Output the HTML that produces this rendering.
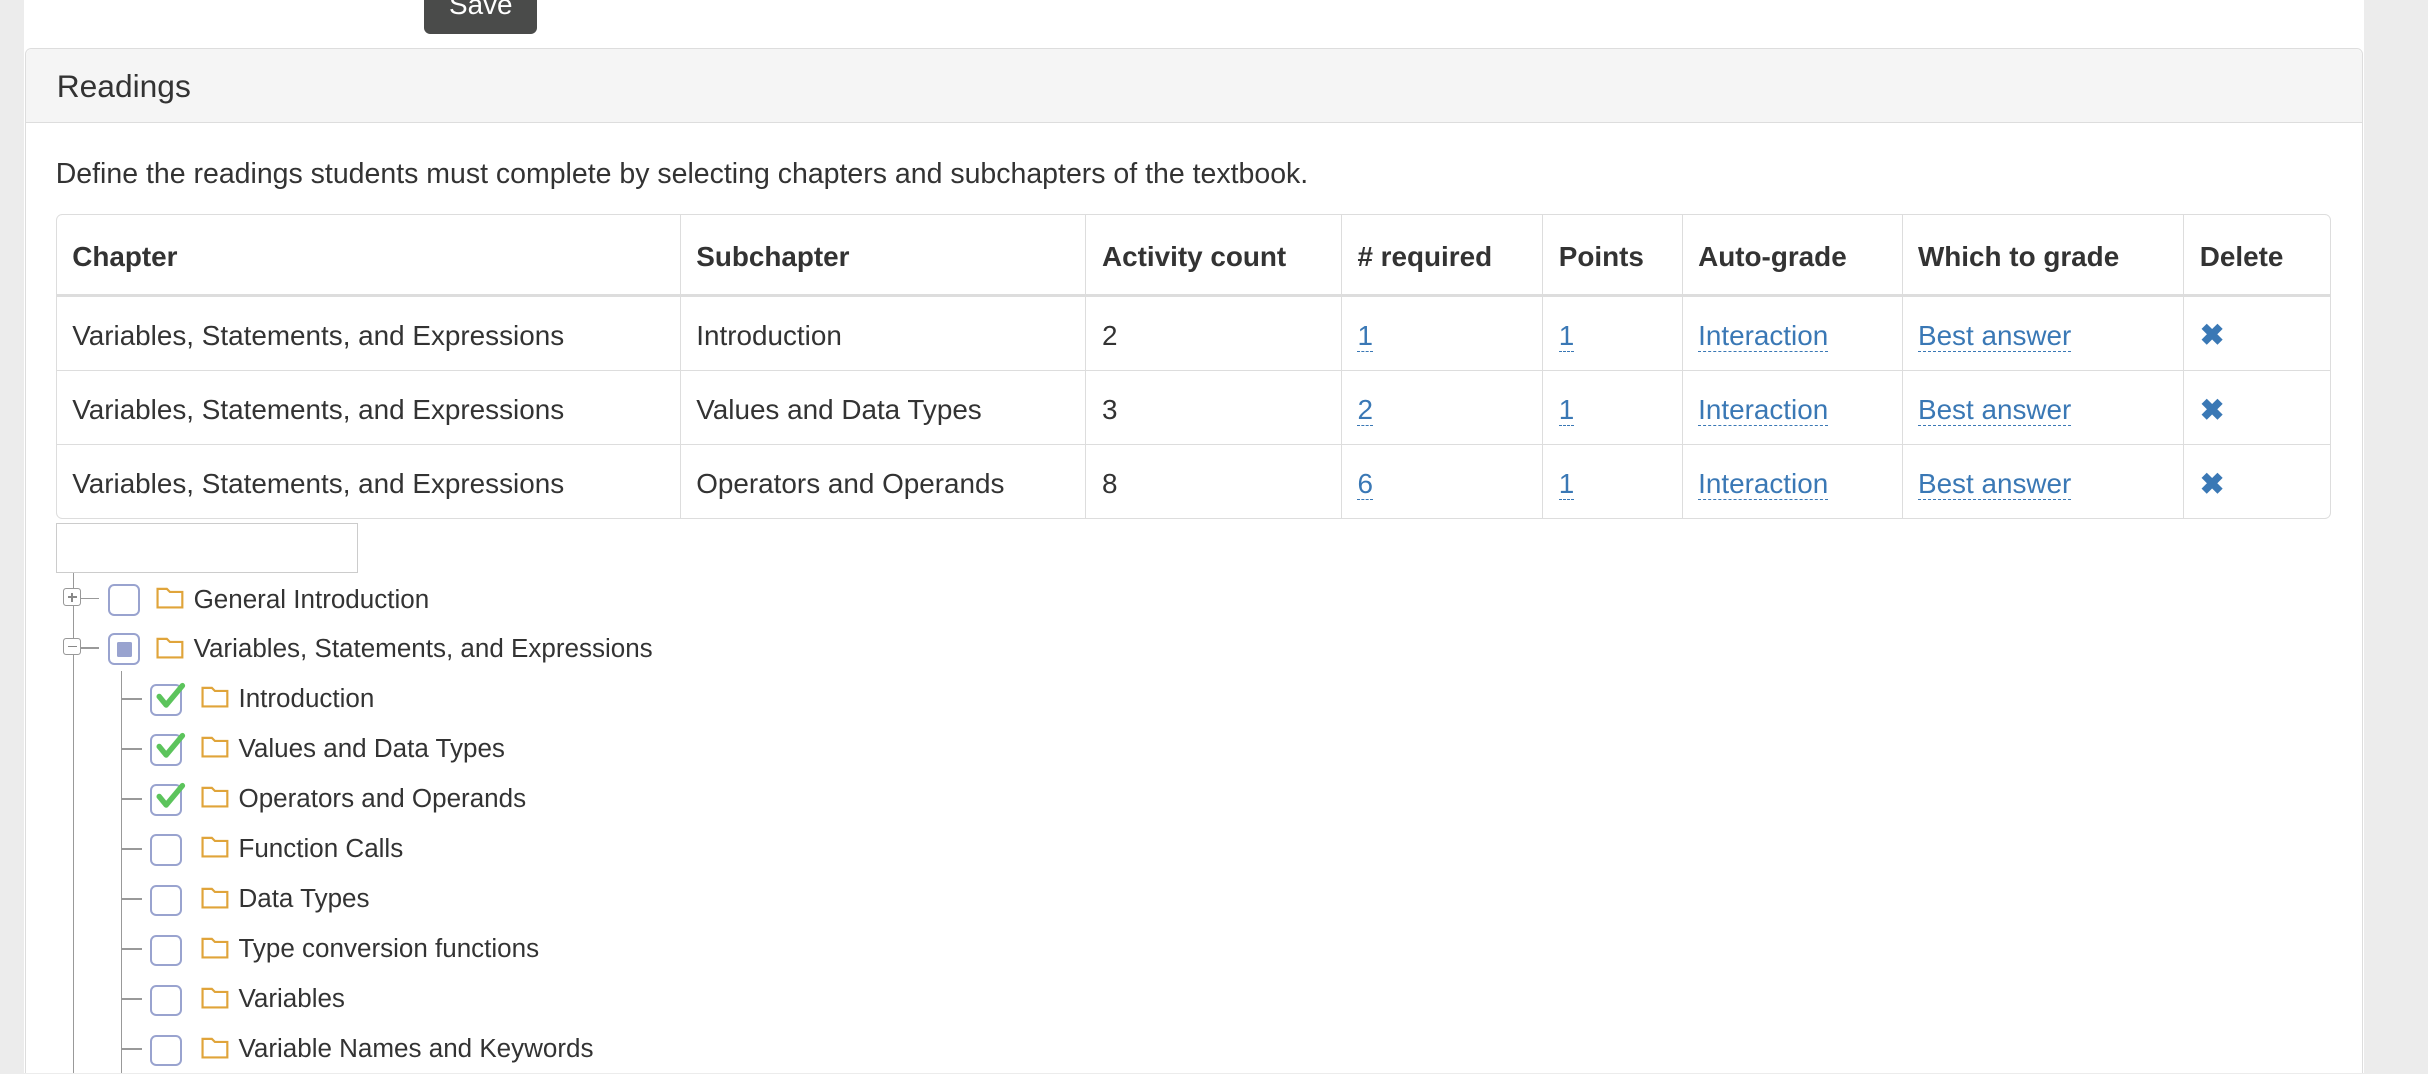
<!DOCTYPE html>
<html><head><meta charset="utf-8">
<style>
html,body{margin:0;padding:0;width:2428px;height:1074px;overflow:hidden;background:#ececec;}
#w{zoom:1.5485;position:relative;width:1568px;height:693px;overflow:hidden;font-family:"Liberation Sans",Arial,sans-serif;color:#333;}
.main{position:absolute;left:15.5px;top:0;width:1511px;height:693px;background:#fff;}
.save{position:absolute;left:274px;top:-10px;width:73px;height:32px;background:#4a4b4a;border-radius:4px;color:#fff;font-size:18px;text-align:center;line-height:26px;}
.panel{position:absolute;left:16px;top:31px;width:1509px;height:661px;border:1px solid #ddd;border-bottom:none;border-radius:4px 4px 0 0;background:#fff;}
.ph{height:47px;background:#f5f5f5;border-bottom:1px solid #ddd;border-radius:4px 4px 0 0;font-size:20.5px;line-height:49px;padding-left:20px;color:#333;}
.desc{position:absolute;left:36px;top:102px;font-size:18.4px;}
table{position:absolute;left:36px;top:138px;border-collapse:separate;border-spacing:0;border:1px solid #ddd;border-radius:4px;font-size:18px;}
td,th{border-right:1px solid #ddd;border-bottom:1px solid #ddd;height:48px;padding:3px 10px 0 10px;text-align:left;box-sizing:border-box;}
th{height:53px;border-bottom-width:2px;border-bottom-color:#ddd;}
tr td:last-child,tr th:last-child{border-right:none}
tr:last-child td{border-bottom:none;height:47px}
a{color:#3a78b5;text-decoration:none;border-bottom:1px dashed #3a78b5;}
.x{color:#3a78b5;font-size:19px;font-weight:bold;}
.inp{position:absolute;left:36px;top:338px;width:194px;height:31px;border:1px solid #ccc;}
.tree{position:absolute;left:0;top:0;font-size:16.8px;color:#333;}
.vl{position:absolute;width:1px;background:#999;}
.hl{position:absolute;height:1px;background:#999;}
.exp{position:absolute;width:10px;height:10px;border:1px solid #999;background:#fff;border-radius:2px;}
.exp::before{content:"";position:absolute;left:2px;top:4.5px;width:6px;height:1px;background:#888;}
.plus::after{content:"";position:absolute;left:4.5px;top:2px;width:1px;height:6px;background:#888;}
.cb{position:absolute;width:18px;height:18px;border:1.5px solid #99a3cf;border-radius:4px;background:#fff;}
.half::after{content:"";position:absolute;left:4px;top:4px;width:10px;height:10px;background:#99a3cf;border-radius:1px;}
.fd{position:absolute;}
.lbl{position:absolute;white-space:nowrap;}
</style></head><body><div id="w">
<div class="main"></div>
<div class="save">Save</div>
<div class="panel"><div class="ph">Readings</div></div>
<div class="desc">Define the readings students must complete by selecting chapters and subchapters of the textbook.</div>
<table>
<tr><th style="width:403px">Chapter</th><th style="width:262px">Subchapter</th><th style="width:165px">Activity count</th><th style="width:130px"># required</th><th style="width:90px">Points</th><th style="width:142px">Auto-grade</th><th style="width:182px">Which to grade</th><th style="width:94px">Delete</th></tr>
<tr><td>Variables, Statements, and Expressions</td><td>Introduction</td><td>2</td><td><a>1</a></td><td><a>1</a></td><td><a>Interaction</a></td><td><a>Best answer</a></td><td><span class="x">✖</span></td></tr>
<tr><td>Variables, Statements, and Expressions</td><td>Values and Data Types</td><td>3</td><td><a>2</a></td><td><a>1</a></td><td><a>Interaction</a></td><td><a>Best answer</a></td><td><span class="x">✖</span></td></tr>
<tr><td>Variables, Statements, and Expressions</td><td>Operators and Operands</td><td>8</td><td><a>6</a></td><td><a>1</a></td><td><a>Interaction</a></td><td><a>Best answer</a></td><td><span class="x">✖</span></td></tr>
</table>
<div class="inp"></div>
<div class="tree">
<div class="vl" style="left:47px;top:370px;height:323px"></div>
<div class="vl" style="left:78px;top:433px;height:260px"></div>
<div class="hl" style="left:47px;top:386px;width:17px"></div>
<div class="hl" style="left:47px;top:418px;width:17px"></div>
<div class="exp plus" style="left:41px;top:380px"></div>
<div class="exp" style="left:41px;top:412px"></div>
<div class="cb" style="left:70px;top:377px"></div>
<div class="cb half" style="left:70px;top:409px"></div>
<svg class="fd" style="left:101px;top:378px" width="18" height="16"><path d="M1 2.5h6l2 2h8v10H1z" fill="none" stroke="#e0a43a" stroke-width="1.4"/></svg>
<svg class="fd" style="left:101px;top:410px" width="18" height="16"><path d="M1 2.5h6l2 2h8v10H1z" fill="none" stroke="#e0a43a" stroke-width="1.4"/></svg>
<div class="lbl" style="left:125px;top:377px">General Introduction</div>
<div class="lbl" style="left:125px;top:409px">Variables, Statements, and Expressions</div>
</div>
<div class="tree" id="kids"></div>
<script>
var items=["Introduction","Values and Data Types","Operators and Operands","Function Calls","Data Types","Type conversion functions","Variables","Variable Names and Keywords"];
var h="";
items.forEach(function(t,i){var y=451+i*32.3;
h+='<div class="hl" style="left:78px;top:'+y+'px;width:14px"></div>';
h+='<div class="cb" style="left:97px;top:'+(y-9)+'px"></div>';
if(i<3)h+='<svg class="fd" style="left:99px;top:'+(y-11)+'px" width="24" height="22"><path d="M4 10l4.5 5.5L19 3" fill="none" stroke="#5cc45c" stroke-width="3.5" stroke-linecap="round" stroke-linejoin="round"/></svg>';
h+='<svg class="fd" style="left:130px;top:'+(y-9)+'px" width="18" height="16"><path d="M1 2.5h6l2 2h8v10H1z" fill="none" stroke="#e0a43a" stroke-width="1.4"/></svg>';
h+='<div class="lbl" style="left:154px;top:'+(y-10)+'px">'+t+'</div>';});
document.getElementById("kids").innerHTML=h;
</script>
</div></body></html>
